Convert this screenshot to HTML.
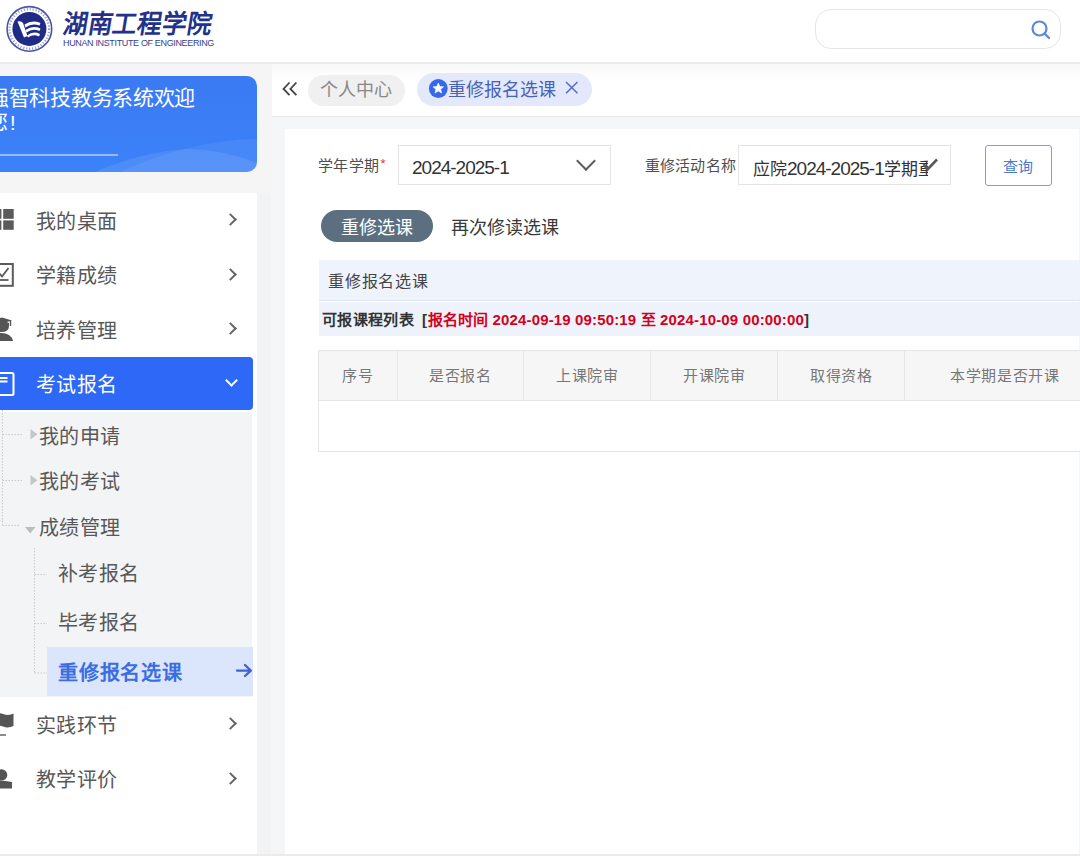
<!DOCTYPE html>
<html lang="zh-CN">
<head>
<meta charset="utf-8">
<style>
*{margin:0;padding:0;box-sizing:border-box}
html,body{width:1080px;height:856px;overflow:hidden;background:#f5f6f8;font-family:"Liberation Sans",sans-serif;color:#333}
.abs{position:absolute}
.t{position:absolute;white-space:nowrap;line-height:1}
#header{left:0;top:0;width:1080px;height:64px;background:#fff;border-bottom:2px solid #ededed}
#side{left:0;top:64px;width:271px;height:794px;background:#f5f5f6}
#welcome{left:-20px;top:76px;width:277px;height:96px;border-radius:10px;background:linear-gradient(180deg,#3a7af3 0%,#3c82f8 100%);overflow:hidden}
#menu{left:0;top:193px;width:257px;height:663px;background:#fff}
.mi{position:absolute;left:36px;font-size:20px;color:#585858;line-height:1;letter-spacing:0.4px}
.chev{position:absolute;left:226px;width:9px;height:9px;border-right:2px solid #666;border-top:2px solid #666;transform:rotate(45deg)}
#active{left:0;top:357px;width:253px;height:53px;background:#2d68f6;border-radius:0 4px 4px 0}
#sub{left:0;top:412px;width:252px;height:285px;background:#f3f4f6}
#hl{left:47px;top:647px;width:206px;height:49px;background:#dbe5fb}
#tabbar{left:272px;top:64px;width:808px;height:53px;background:linear-gradient(180deg,#f8f8f8 0px,#fff 16px);border-bottom:1.5px solid #e8e8e8}
#content{left:285px;top:129px;width:794px;height:728px;background:#fff}
</style>
</head>
<body><div id="wrap" style="position:absolute;left:0;top:0;width:1080px;height:856px">
<div id="header" class="abs">
  <!-- logo -->
  <svg class="abs" style="left:5px;top:5px" width="48" height="48" viewBox="0 0 48 48">
    <circle cx="24.4" cy="23.9" r="22.3" fill="#fff" stroke="#4b56a3" stroke-width="1.6"/>
    <circle cx="24.4" cy="23.9" r="19.8" fill="none" stroke="#9aa0cf" stroke-width="2.4" stroke-dasharray="1.2 1.8"/>
    <circle cx="24.4" cy="23.9" r="17" fill="#1f2b85"/>
    <path d="M12.5 16.5 Q16 15.5 18 18 L22.5 31 L19 32.5 Z" fill="#fff"/>
    <path d="M19.5 19.5 Q27 14.5 35.5 18 L34.5 20.5 Q27 17.5 20.5 22.5 Z M20.5 25 Q27.5 20 35.5 23.5 L34.5 26 Q27.5 23 21.5 27.5 Z M22 30.5 Q28 25.5 35 29 L34 31.5 Q28.5 28.5 23 32.5 Z" fill="#fff"/>
  </svg>
  <div class="t" style="left:63px;top:12px;font-size:26px;color:#24318a;transform:scaleX(0.94) skewX(-10deg);transform-origin:left;font-weight:600;letter-spacing:0.5px;font-family:'Liberation Serif',serif">湖南工程学院</div>
  <div class="t" style="left:63px;top:39px;font-size:9px;color:#34428f;letter-spacing:-0.35px;font-weight:normal">HUNAN INSTITUTE OF ENGINEERING</div>
  <div class="abs" style="left:815px;top:9px;width:246px;height:40px;border:1px solid #e6e6e6;border-radius:16px;background:#fff"></div>
  <svg class="abs" style="left:1030px;top:19px" width="22" height="22" viewBox="0 0 22 22">
    <circle cx="9.5" cy="9.5" r="7" fill="none" stroke="#5b8ad6" stroke-width="2.2"/>
    <path d="M14.5 14.5 L19 19" stroke="#5b8ad6" stroke-width="2.4" stroke-linecap="round"/>
  </svg>
</div>

<div id="side" class="abs"></div>
<div id="welcome" class="abs">
  <svg class="abs" style="left:0;top:0" width="277" height="96" viewBox="-20 76 277 96">
    <path d="M95 172 Q140 152 188 149 Q225 150 257 163 L257 172 Z" fill="rgba(255,255,255,0.09)"/>
    <path d="M120 172 Q190 140 257 139 L257 172 Z" fill="rgba(255,255,255,0.06)"/>
  </svg>
</div>
<div class="t" style="left:-12px;top:87px;font-size:21px;letter-spacing:-0.3px;color:#fff">强智科技教务系统欢迎</div>
<div class="t" style="left:-13px;top:110.7px;font-size:21px;color:#fff">您</div>
<div class="t" style="left:10px;top:113px;font-size:20px;color:#fff">!</div>
<div class="abs" style="left:0;top:154px;width:118px;height:2px;background:rgba(255,255,255,0.45)"></div>

<div id="menu" class="abs"></div>
<div class="abs" style="left:257px;top:193px;width:14px;height:663px;background:#f2f3f5"></div>
<div class="t mi" style="top:211.5px">我的桌面</div>
<div class="chev" style="top:215px"></div>
<div class="t mi" style="top:265.5px">学籍成绩</div>
<div class="chev" style="top:270px"></div>
<div class="t mi" style="top:320.5px">培养管理</div>
<div class="chev" style="top:324px"></div>
<div id="active" class="abs"></div>
<div class="t mi" style="top:374.5px;color:#fff">考试报名</div>
<div class="abs" style="left:227px;top:376px;width:9px;height:9px;border-right:2px solid #fff;border-bottom:2px solid #fff;transform:rotate(45deg)"></div>

<div id="sub" class="abs"></div>
<svg class="abs" style="left:0;top:200px" width="20" height="600" viewBox="0 200 20 600">
  <!-- windows -->
  <rect x="-8" y="209" width="9.4" height="9.8" fill="#5a5a5a"/>
  <rect x="3.2" y="209" width="10.5" height="9.8" fill="#5a5a5a"/>
  <rect x="-8" y="220.4" width="9.4" height="9.4" fill="#5a5a5a"/>
  <rect x="3.2" y="220.4" width="10.5" height="9.4" fill="#5a5a5a"/>
  <!-- checkbox -->
  <rect x="-10" y="264" width="22.8" height="21.8" fill="none" stroke="#5a5a5a" stroke-width="2"/>
  <path d="M-1 273 L2 276.5 L8.5 268" fill="none" stroke="#5a5a5a" stroke-width="1.8"/>
  <path d="M-4 280 L8.5 280" stroke="#5a5a5a" stroke-width="1.8"/>
  <!-- grad cap / person -->
  <path d="M-9 320.5 L2 317.5 L12 320.5 L2 323.5 Z" fill="#555"/>
  <path d="M10.5 320.5 L10.5 326" stroke="#555" stroke-width="1.4"/>
  <path d="M-7 323 Q2 319 9 323 L9 326 Q9 332 1 332 Q-7 332 -7 326 Z" fill="#555"/>
  <path d="M-12 341 Q-10 333 1 333 Q11 333 13 341 Z" fill="#555"/>
  <!-- doc (active) -->
  <rect x="-10" y="373" width="23.5" height="22" rx="1.5" fill="none" stroke="#fff" stroke-width="2.1"/>
  <path d="M-6 378 L7.5 378 M-6 381.5 L7.5 381.5" stroke="#fff" stroke-width="1.8"/>
  <!-- flag -->
  <path d="M-10 715 Q-3 712 3 714 Q9 716 13.5 713.5 L13.5 726 Q8 728.5 3 726.5 Q-3 724.5 -10 727.5 Z" fill="#555"/>
  <path d="M-10 735 L6 735" stroke="#666" stroke-width="1.5"/>
  <!-- person -->
  <circle cx="1.5" cy="775" r="5.8" fill="#555"/>
  <path d="M-10 788.5 L-10 781.5 Q-4 779.5 1.5 781 L5.5 781 L12 782 L12 788.5 Z" fill="#555"/>
</svg>
<div class="t mi" style="left:39px;top:426.5px">我的申请</div>
<div class="t mi" style="left:39px;top:471.5px">我的考试</div>
<div class="t mi" style="left:39px;top:517.5px">成绩管理</div>
<div class="t mi" style="left:58px;top:564px">补考报名</div>
<div class="t mi" style="left:58px;top:613px">毕考报名</div>
<svg class="abs" style="left:0;top:410px" width="60" height="290" viewBox="0 410 60 290">
  <g stroke="#c9c9c9" stroke-width="1" stroke-dasharray="1.5 1.5" fill="none">
    <path d="M2.5 410 L2.5 525 M2.5 434.5 L22 434.5 M2.5 480.5 L22 480.5 M2.5 525.5 L20 525.5"/>
    <path d="M34.5 548 L34.5 673 M34.5 574.5 L47 574.5 M34.5 623.5 L47 623.5 M34.5 673 L47 673"/>
  </g>
  <path d="M30.5 429 L37.5 434.2 L30.5 439.4 Z M30.5 475 L37.5 480.3 L30.5 485.6 Z" fill="#c6c6c6"/>
  <path d="M25 527 L35.5 527 L30.2 533.5 Z" fill="#bdbdbd"/>
</svg>
<div id="hl" class="abs"></div>
<div class="t mi" style="left:58px;top:663px;color:#3a6de2;font-weight:bold;letter-spacing:0.8px">重修报名选课</div>
<svg class="abs" style="left:230px;top:660px" width="25" height="22" viewBox="230 660 25 22"><path d="M237 670.6 L250.5 670.6 M245 665 L250.8 670.6 L245 676" fill="none" stroke="#3d62d8" stroke-width="2.3" stroke-linecap="round" stroke-linejoin="round"/></svg>

<div class="t mi" style="top:715.5px">实践环节</div>
<div class="chev" style="top:719px"></div>
<div class="t mi" style="top:770px">教学评价</div>
<div class="chev" style="top:774px"></div>

<div id="tabbar" class="abs"></div>
<svg class="abs" style="left:276px;top:74px" width="30" height="30" viewBox="276 74 30 30"><path d="M289.5 82.5 L283.5 89 L289.5 95.2 M296.4 82.5 L290.4 89 L296.4 95.2" fill="none" stroke="#444" stroke-width="1.8"/></svg>
<div class="abs" style="left:308px;top:75px;width:97px;height:31px;border-radius:16px;background:#f0f0f0"></div>
<div class="t" style="left:320px;top:81px;font-size:18px;color:#888">个人中心</div>
<div class="abs" style="left:417px;top:73px;width:175px;height:33px;border-radius:17px;background:#e3e9fb"></div>
<svg class="abs" style="left:424px;top:74px" width="30" height="30" viewBox="424 74 30 30"><circle cx="438.3" cy="88.5" r="9.4" fill="#3767ea"/><path d="M438.3 83 L439.8 86.6 L443.6 86.8 L440.7 89.3 L441.6 93.1 L438.3 91 L435 93.1 L435.9 89.3 L433 86.8 L436.8 86.6 Z" fill="#fff" stroke="#fff" stroke-width="0.6" stroke-linejoin="round"/></svg>
<div class="t" style="left:448px;top:81px;font-size:18px;color:#4862b8">重修报名选课</div>
<svg class="abs" style="left:556px;top:74px" width="30" height="30" viewBox="556 74 30 30"><path d="M566 82 L577.5 93.3 M577.5 82 L566 93.3" fill="none" stroke="#5870c2" stroke-width="1.6"/></svg>

<div id="content" class="abs"></div>
<!-- form -->
<div class="t" style="left:317.5px;top:158px;font-size:15px;color:#505050;letter-spacing:0.5px">学年学期<span style="color:#e33;font-size:13px;vertical-align:top;position:relative;top:-1px;left:1px">*</span></div>
<div class="abs" style="left:398px;top:145px;width:213px;height:40px;border:1px solid #e4e4e4;background:#fff"></div>
<div class="t" style="left:412px;top:157.5px;font-size:19px;color:#333;letter-spacing:-1px">2024-2025-1</div>
<div class="abs" style="left:579px;top:154px;width:14px;height:14px;border-right:2.2px solid #5e5e5e;border-bottom:2.2px solid #5e5e5e;transform:rotate(45deg)"></div>

<div class="t" style="left:644.5px;top:158px;font-size:15px;color:#505050;letter-spacing:0.3px">重修活动名称</div>
<div class="abs" style="left:738px;top:145px;width:213px;height:40px;border:1px solid #e4e4e4;background:#fff"></div>
<div class="abs" style="left:750px;top:150px;width:178px;height:30px;overflow:hidden"><div class="t" style="left:3px;top:8.5px;font-size:17px;color:#333">应院<span style="font-size:19px;letter-spacing:-1px">2024-2025-1</span>学期重</div></div>
<svg class="abs" style="left:915px;top:150px" width="30" height="30" viewBox="915 150 30 30"><path d="M923.5 164 L927.5 169.5 L937 159.5" fill="none" stroke="#595959" stroke-width="2.6"/></svg>

<div class="abs" style="left:985px;top:144.5px;width:67px;height:41px;border:1.6px solid #809fd6;border-radius:3px;background:#fff"></div>
<div class="t" style="left:1003px;top:158.5px;font-size:15px;color:#4a78cc">查询</div>

<div class="abs" style="left:321px;top:210px;width:112px;height:32px;border-radius:16px;background:#5b6f80"></div>
<div class="t" style="left:341px;top:218.5px;font-size:18px;color:#fff">重修选课</div>
<div class="t" style="left:451px;top:218.5px;font-size:18px;color:#3a3a3a">再次修读选课</div>

<!-- panel -->
<div class="abs" style="left:319px;top:260px;width:761px;height:41px;background:#eff3fb;border-bottom:1px solid #dfe5ef"></div>
<div class="t" style="left:328px;top:274px;font-size:16px;color:#454545;letter-spacing:0.8px">重修报名选课</div>
<div class="abs" style="left:319px;top:302px;width:761px;height:34px;background:#eef3fb"></div>
<div class="t" style="left:322px;top:311.5px;font-size:15px;color:#333;font-weight:bold"><span style="letter-spacing:0.35px">可报课程列表</span><span style="margin-left:8px">[</span><span style="color:#d5001c;margin-left:0.5px;letter-spacing:0.15px">报名时间 2024-09-19 09:50:19 至 2024-10-09 00:00:00</span>]</div>

<!-- table -->
<div class="abs" style="left:318px;top:350px;width:762px;height:102px;border:1px solid #e6e6e6;border-right:none;background:#fff"></div>
<div class="abs" style="left:319px;top:351px;width:761px;height:50px;background:#f6f6f6;border-bottom:1px solid #e6e6e6"></div>
<div class="abs" style="left:397px;top:351px;width:1px;height:50px;background:#e6e6e6"></div>
<div class="abs" style="left:523px;top:351px;width:1px;height:50px;background:#e6e6e6"></div>
<div class="abs" style="left:650px;top:351px;width:1px;height:50px;background:#e6e6e6"></div>
<div class="abs" style="left:777px;top:351px;width:1px;height:50px;background:#e6e6e6"></div>
<div class="abs" style="left:904px;top:351px;width:1px;height:50px;background:#e6e6e6"></div>
<div class="t" style="left:342px;top:368px;font-size:15px;color:#777;letter-spacing:0.7px">序号</div>
<div class="t" style="left:429px;top:368px;font-size:15px;color:#777;letter-spacing:0.7px">是否报名</div>
<div class="t" style="left:556px;top:368px;font-size:15px;color:#777;letter-spacing:0.7px">上课院审</div>
<div class="t" style="left:683px;top:368px;font-size:15px;color:#777;letter-spacing:0.7px">开课院审</div>
<div class="t" style="left:810px;top:368px;font-size:15px;color:#777;letter-spacing:0.7px">取得资格</div>
<div class="t" style="left:950px;top:368px;font-size:15px;color:#777;letter-spacing:0.7px">本学期是否开课</div>
<div class="abs" style="left:0;top:854px;width:1080px;height:2px;background:#ebebeb"></div>
</div></body>
</html>
